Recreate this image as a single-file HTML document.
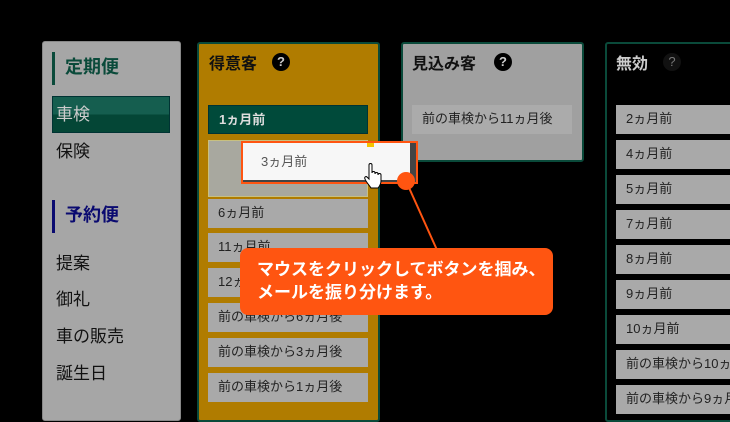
<!DOCTYPE html>
<html><head><meta charset="utf-8"><style>
*{margin:0;padding:0;box-sizing:border-box}
body{width:730px;height:410px;background:#000;position:relative;overflow:hidden;font-family:"Liberation Sans","Noto Sans CJK JP",sans-serif}
.a{position:absolute}
.side{left:42px;top:41px;width:139px;height:380px;background:#a6a6a6;border:1px solid #888;border-radius:3px}
.h{font-weight:bold;font-size:18px}
.nav{font-size:17px;color:#111}
.col{border:2px solid #0a4a3a;border-radius:3px}
.t{font-weight:bold;font-size:16px;color:#111}
.q{width:18px;height:18px;border-radius:50%;background:#000;color:#ccc;font-size:13px;text-align:center;line-height:18px;font-weight:bold}
.it{height:29px;background:#a9a9a9;font-size:13px;color:#222;line-height:28px;padding-left:10px;white-space:nowrap;overflow:hidden}
</style></head><body>
<div class="a side"></div>
<div class="a" style="left:52px;top:52px;width:3px;height:33px;background:#0a4a3a"></div>
<div class="a h" style="left:65px;top:53px;color:#0a4a3a">定期便</div>
<div class="a" style="left:52px;top:96px;width:118px;height:37px;background:linear-gradient(#155e4f 50%,#044636 50%);border:1px solid #033"></div>
<div class="a nav" style="left:56px;top:100px;color:#ccc">車検</div>
<div class="a nav" style="left:56px;top:137px">保険</div>
<div class="a" style="left:52px;top:200px;width:3px;height:33px;background:#0a0a70"></div>
<div class="a h" style="left:65px;top:201px;color:#0a0a70">予約便</div>
<div class="a nav" style="left:56px;top:249px">提案</div>
<div class="a nav" style="left:56px;top:285px">御礼</div>
<div class="a nav" style="left:56px;top:322px">車の販売</div>
<div class="a nav" style="left:56px;top:359px">誕生日</div>

<div class="a col" style="left:197px;top:42px;width:183px;height:380px;background:#b07c00"></div>
<div class="a t" style="left:209px;top:50px">得意客</div>
<div class="a q" style="left:272px;top:53px">?</div>
<div class="a it" style="left:208px;top:105px;width:160px;background:#004a3a;color:#ddd;font-weight:bold;border:1px solid #033">1ヵ月前</div>
<div class="a" style="left:208px;top:140px;width:160px;height:57px;background:#a8a89f;border:1px solid #c8c080"></div>
<div class="a it" style="left:208px;top:199px;width:160px">6ヵ月前</div>
<div class="a it" style="left:208px;top:233px;width:160px">11ヵ月前</div>
<div class="a it" style="left:208px;top:268px;width:160px">12ヵ月前</div>
<div class="a it" style="left:208px;top:303px;width:160px">前の車検から6ヵ月後</div>
<div class="a it" style="left:208px;top:338px;width:160px">前の車検から3ヵ月後</div>
<div class="a it" style="left:208px;top:373px;width:160px">前の車検から1ヵ月後</div>

<div class="a col" style="left:401px;top:42px;width:183px;height:120px;background:#a0a0a0"></div>
<div class="a t" style="left:412px;top:50px">見込み客</div>
<div class="a q" style="left:494px;top:53px">?</div>
<div class="a it" style="left:412px;top:105px;width:160px;background:#ababab">前の車検から11ヵ月後</div>

<div class="a col" style="left:605px;top:42px;width:140px;height:380px;background:#000"></div>
<div class="a t" style="left:616px;top:50px;color:#ccc">無効</div>
<div class="a q" style="left:663px;top:53px;background:#111;color:#777;font-weight:normal">?</div>
<div class="a it" style="left:616px;top:105px;width:120px">2ヵ月前</div>
<div class="a it" style="left:616px;top:140px;width:120px">4ヵ月前</div>
<div class="a it" style="left:616px;top:175px;width:120px">5ヵ月前</div>
<div class="a it" style="left:616px;top:210px;width:120px">7ヵ月前</div>
<div class="a it" style="left:616px;top:245px;width:120px">8ヵ月前</div>
<div class="a it" style="left:616px;top:280px;width:120px">9ヵ月前</div>
<div class="a it" style="left:616px;top:315px;width:120px">10ヵ月前</div>
<div class="a it" style="left:616px;top:350px;width:120px">前の車検から10ヵ月後</div>
<div class="a it" style="left:616px;top:385px;width:120px">前の車検から9ヵ月後</div>

<div class="a" style="left:241px;top:141px;width:177px;height:43px;background:#444;border:2px solid #ff5511"></div>
<div class="a" style="left:243px;top:143px;width:167px;height:37px;background:#f7f7f7"></div>
<div class="a" style="left:367px;top:143px;width:7px;height:4px;background:#f5c400"></div>
<div class="a" style="left:261px;top:151px;font-size:13px;color:#555">3ヵ月前</div>
<svg class="a" style="left:364px;top:163px" width="22" height="26" viewBox="0 0 22 26"><path d="M5 2c0-2 3-2 3 0v8c0-2 3-2 3 0v1c0-2 3-2 3 0v1c0-2 3-2 3 0v6c0 3-2 6-3 7H7c-1-2-5-6-6-9-1-2 1-3 2-2l2 2z" fill="#fff" stroke="#000" stroke-width="1"/></svg>
<svg class="a" style="left:0;top:0" width="730" height="410"><line x1="406" y1="181" x2="437" y2="250" stroke="#ff5511" stroke-width="2"/><circle cx="406" cy="181" r="9" fill="#ff5511"/></svg>
<div class="a" style="left:240px;top:248px;width:313px;height:67px;background:#ff5511;border-radius:8px"></div>
<div class="a" style="left:257px;top:258px;font-size:17px;font-weight:bold;color:#fff;line-height:23px">マウスをクリックしてボタンを掴み、<br>メールを振り分けます。</div>
</body></html>
